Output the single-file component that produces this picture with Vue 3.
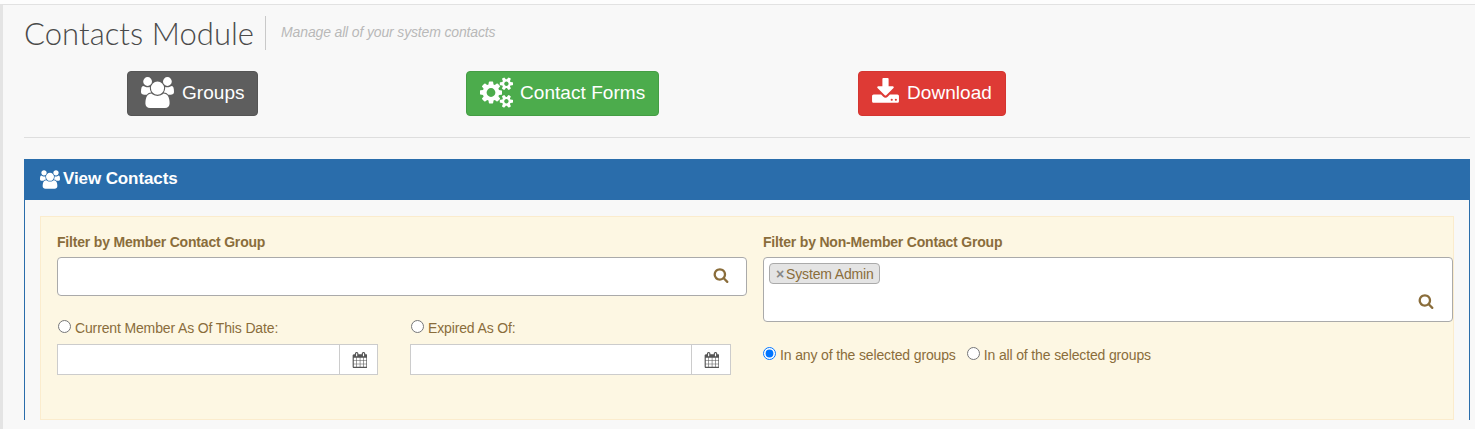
<script setup>
const usersPath = "M593 896q-162 5-265 128h-134q-82 0-138-40.500t-56-118.500q0-353 124-353 6 0 43.500 21t97.500 42.500 119 21.500q67 0 133-23-5 37-5 66 0 139 81 256zm1071 637q0 120-73 189.500t-194 69.500h-874q-121 0-194-69.500t-73-189.500q0-53 3.500-103.500t14-109 26.500-108.500 43-97.500 62-81 85.500-53.500 111.500-20q10 0 43 21.500t73 48 107 48 135 21.500 135-21.500 107-48 73-48 43-21.500q61 0 111.500 20t85.500 53.500 62 81 43 97.500 26.500 108.500 14 109 3.500 103.500zm-1024-1277q0 106-75 181t-181 75-181-75-75-181 75-181 181-75 181 75 75 181zm704 384q0 159-112.500 271.500t-271.500 112.500-271.500-112.500-112.500-271.500 112.500-271.500 271.500-112.500 271.500 112.500 112.500 271.500zm576 225q0 78-56 118.500t-138 40.500h-134q-103-123-265-128 81-117 81-256 0-29-5-66 66 23 133 23 59 0 119-21.500t97.500-42.500 43.500-21q124 0 124 353zm-128-609q0 106-75 181t-181 75-181-75-75-181 75-181 181-75 181 75 75 181z";
const cogsPath = "M896 896q0-106-75-181t-181-75-181 75-75 181 75 181 181 75 181-75 75-181zm768 512q0-52-38-90t-90-38-90 38-38 90q0 53 37.500 90.500t90.500 37.500 90.500-37.500 37.500-90.500zm0-1024q0-52-38-90t-90-38-90 38-38 90q0 53 37.500 90.500t90.500 37.500 90.500-37.500 37.500-90.500zm-384 421v185q0 10-7 19.500t-16 10.500l-155 24q-11 35-32 76 34 48 90 115 7 11 7 20 0 12-7 19-23 30-82.500 89.500t-78.500 59.500q-11 0-21-7l-115-90q-37 19-77 31-11 108-23 155-7 24-30 24h-186q-11 0-20-7.500t-10-17.500l-23-153q-34-10-75-31l-118 89q-7 7-20 7-11 0-21-8-144-133-144-160 0-9 7-19 10-14 41-53t47-61q-23-44-35-82l-152-24q-10-1-17-9.500t-7-19.500v-185q0-10 7-19.500t16-10.500l155-24q11-35 32-76-34-48-90-115-7-11-7-20 0-12 7-20 22-30 82-89t79-59q11 0 21 7l115 90q34-18 77-32 11-108 23-154 7-24 30-24h186q11 0 20 7.500t10 17.500l23 153q34 10 75 31l118-89q8-7 20-7 11 0 21 8 144 133 144 160 0 8-7 19-12 16-42 54t-45 60q23 48 34 82l152 23q10 2 17 10.500t7 19.500zm640 533v140q0 16-149 31-12 27-30 52 51 113 51 138 0 4-4 7-122 71-124 71-8 0-46-47t-52-68q-20 2-30 2t-30-2q-14 21-52 68t-46 47q-2 0-124-71-4-3-4-7 0-25 51-138-18-25-30-52-149-15-149-31v-140q0-16 149-31 13-29 30-52-51-113-51-138 0-4 4-7 4-2 35-20t59-34 30-16q8 0 46 46.500t52 67.500q20-2 30-2t30 2q51-71 92-112l6-2q4 0 124 70 4 3 4 7 0 25-51 138 17 23 30 52 149 15 149 31zm0-1024v140q0 16-149 31-12 27-30 52 51 113 51 138 0 4-4 7-122 71-124 71-8 0-46-47t-52-68q-20 2-30 2t-30-2q-14 21-52 68t-46 47q-2 0-124-71-4-3-4-7 0-25 51-138-18-25-30-52-149-15-149-31v-140q0-16 149-31 13-29 30-52-51-113-51-138 0-4 4-7 4-2 35-20t59-34 30-16q8 0 46 46.500t52 67.500q20-2 30-2t30 2q51-71 92-112l6-2q4 0 124 70 4 3 4 7 0 25-51 138 17 23 30 52 149 15 149 31z";
const downloadPath = "M1344 1344q0-26-19-45t-45-19-45 19-19 45 19 45 45 19 45-19 19-45zm256 0q0-26-19-45t-45-19-45 19-19 45 19 45 45 19 45-19 19-45zm128-224v320q0 40-28 68t-68 28h-1472q-40 0-68-28t-28-68v-320q0-40 28-68t68-28h465l135 136q58 56 136 56t136-56l136-136h464q40 0 68 28t28 68zm-325-569q17 41-14 70l-448 448q-18 19-45 19t-45-19l-448-448q-31-29-14-70 17-39 59-39h256v-448q0-26 19-45t45-19h256q26 0 45 19t19 45v448h256q42 0 59 39z";
const searchPath = "M1216 832q0-185-131.500-316.500t-316.500-131.500-316.500 131.500-131.500 316.500 131.500 316.500 316.500 131.500 316.500-131.500 131.500-316.500zm512 832q0 52-38 90t-90 38q-54 0-90-38l-343-342q-179 124-399 124-143 0-273.500-55.500t-225-150-150-225-55.500-273.500 55.500-273.500 150-225 225-150 273.500-55.500 273.500 55.500 225 150 150 225 55.500 273.500q0 220-124 399l343 343q37 37 37 90z";
const calendarPath = "M192 1664h288v-288h-288v288zm352 0h320v-288h-320v288zm-352-352h288v-320h-288v320zm352 0h320v-320h-320v320zm-352-384h288v-288h-288v288zm736 736h320v-288h-320v288zm-384-736h320v-288h-320v288zm768 736h288v-288h-288v288zm-384-352h320v-320h-320v320zm-352-864v-288q0-13-9.500-22.500t-22.500-9.500h-64q-13 0-22.500 9.500t-9.500 22.500v288q0 13 9.500 22.500t22.500 9.500h64q13 0 22.500-9.500t9.500-22.500zm736 864h288v-320h-288v320zm-384-384h320v-288h-320v288zm384 0h288v-288h-288v288zm32-480v-288q0-13-9.500-22.500t-22.500-9.500h-64q-13 0-22.500 9.500t-9.500 22.500v288q0 13 9.500 22.500t22.500 9.500h64q13 0 22.500-9.500t9.500-22.500zm384-64v1280q0 52-38 90t-90 38h-1408q-52 0-90-38t-38-90v-1280q0-52 38-90t90-38h128v-96q0-66 47-113t113-47h64q66 0 113 47t47 113v96h384v-96q0-66 47-113t113-47h64q66 0 113 47t47 113v96h128q52 0 90 38t38 90z";
</script>

<template>
  <div class="page">
    <div class="content">
      <header class="title-row">
        <h1 class="title">Contacts Module</h1>
        <span class="subtitle">Manage all of your system contacts</span>
      </header>

      <div class="actions">
        <a class="btn btn-groups">
          <svg class="btn-icon icon-users" viewBox="0 0 1920 1792"><path :d="usersPath" fill="currentColor" /></svg>
          Groups
        </a>
        <a class="btn btn-forms">
          <svg class="btn-icon icon-cogs" viewBox="0 0 1920 1792"><path :d="cogsPath" fill="currentColor" /></svg>
          Contact Forms
        </a>
        <a class="btn btn-download">
          <svg class="btn-icon icon-download" viewBox="0 0 1792 1792"><path :d="downloadPath" fill="currentColor" /></svg>
          Download
        </a>
      </div>

      <hr class="rule" />

      <section class="panel">
        <div class="panel-head">
          <svg class="head-icon" viewBox="0 0 1920 1792"><path :d="usersPath" fill="currentColor" /></svg>
          <span>View Contacts</span>
        </div>
        <div class="panel-body">
          <div class="filters">
            <div class="col">
              <label class="field-label">Filter by Member Contact Group</label>
              <div class="select select-single">
                <svg class="search" viewBox="0 0 1792 1792"><path :d="searchPath" fill="currentColor" /></svg>
              </div>
              <div class="dates">
                <div class="date">
                  <label class="radio-line">
                    <input type="radio" name="member" />
                    <span>Current Member As Of This Date:</span>
                  </label>
                  <div class="date-input">
                    <div class="date-field"></div>
                    <div class="date-addon">
                      <svg class="calendar" viewBox="0 0 1664 1792"><path :d="calendarPath" fill="currentColor" /></svg>
                    </div>
                  </div>
                </div>
                <div class="date">
                  <label class="radio-line">
                    <input type="radio" name="member" />
                    <span>Expired As Of:</span>
                  </label>
                  <div class="date-input">
                    <div class="date-field"></div>
                    <div class="date-addon">
                      <svg class="calendar" viewBox="0 0 1664 1792"><path :d="calendarPath" fill="currentColor" /></svg>
                    </div>
                  </div>
                </div>
              </div>
            </div>

            <div class="col">
              <label class="field-label">Filter by Non-Member Contact Group</label>
              <div class="select select-multi">
                <span class="tag"><span class="tag-x">×</span>System Admin</span>
                <svg class="search" viewBox="0 0 1792 1792"><path :d="searchPath" fill="currentColor" /></svg>
              </div>
              <div class="match">
                <label class="radio-line">
                  <input type="radio" name="match" checked />
                  <span>In any of the selected groups</span>
                </label>
                <label class="radio-line">
                  <input type="radio" name="match" />
                  <span>In all of the selected groups</span>
                </label>
              </div>
            </div>
          </div>
        </div>
      </section>
    </div>
  </div>
</template>

<style>
html, body {
  margin: 0;
  background: #fdfdfd;
  overflow: hidden;
}
</style>

<style scoped>
.page {
  height: 429px;
  box-sizing: border-box;
  padding-top: 4px;
  font-family: "Liberation Sans", Arial, sans-serif;
  overflow: hidden;
}
.content {
  height: 100%;
  box-sizing: border-box;
  padding: 11px 5px 0 21px;
  background: #f8f8f8;
  border-top: 1px solid #e2e2e2;
  border-left: 3px solid #e4e4e4;
}
.title-row {
  display: flex;
  align-items: flex-start;
  height: 34px;
}
.title {
  margin: 0;
  padding-right: 11px;
  height: 34px;
  border-right: 1px solid #c9c9c9;
  font-family: Lato, sans-serif;
  font-weight: 300;
  font-size: 31px;
  letter-spacing: 0.05px;
  line-height: 35px;
  color: #4a4a4a;
}
.subtitle {
  margin: 8px 0 0 15px;
  font-style: italic;
  font-size: 14px;
  letter-spacing: -0.15px;
  line-height: 16px;
  color: #b9b9b9;
}
.actions {
  display: flex;
  padding: 21px 0 0 103px;
  height: 45px;
}
.btn {
  display: flex;
  align-items: center;
  box-sizing: border-box;
  height: 45px;
  padding-bottom: 2px;
  border-radius: 4px;
  border: 1px solid;
  color: #fff;
  font-size: 19px;
  letter-spacing: 0.05px;
}
.btn-icon {
  display: block;
}
.btn-groups {
  width: 131px;
  padding-left: 13px;
  background: #5e5e5e;
  border-color: #555;
}
.icon-users {
  width: 33px;
  height: 31px;
  margin-right: 8px;
}
.btn-forms {
  width: 193px;
  margin-left: 208px;
  padding-left: 13px;
  background: #4cac4c;
  border-color: #449d44;
}
.icon-cogs {
  width: 33px;
  height: 31px;
  margin-right: 7px;
}
.btn-download {
  width: 148px;
  margin-left: 199px;
  padding-left: 12px;
  background: #de3a35;
  border-color: #d43530;
}
.icon-download {
  width: 29px;
  height: 29px;
  margin-right: 7px;
}
.rule {
  margin: 21px 0 0;
  border: 0;
  border-top: 1px solid #dedede;
}
.panel {
  margin-top: 21px;
  border: 1px solid #2a6dab;
  border-bottom: 0;
}
.panel-head {
  display: flex;
  align-items: center;
  height: 40px;
  padding-left: 15px;
  margin: -1px -1px 0;
  padding-bottom: 1px;
  background: #2a6dab;
  color: #fff;
  font-size: 17px;
  letter-spacing: -0.1px;
  font-weight: 700;
}
.head-icon {
  width: 20px;
  height: 19px;
  margin: 0 3px 0 1px;
  flex: none;
}
.panel-body {
  padding: 16px 15px 0;
}
.filters {
  display: grid;
  grid-template-columns: 690px 690px;
  column-gap: 16px;
  height: 204px;
  box-sizing: border-box;
  padding: 16px 0 0 16px;
  background: #fdf7e3;
  border: 1px solid #fbeccd;
  color: #8a6d3b;
  font-size: 14px;
}
.field-label {
  display: block;
  font-weight: 700;
  font-size: 14px;
  letter-spacing: -0.19px;
  line-height: 18px;
  margin-bottom: 6px;
}
.select {
  position: relative;
  box-sizing: border-box;
  background: #fff;
  border: 1px solid #aaa;
  border-radius: 4px;
}
.select-single {
  height: 39px;
}
.select-multi {
  height: 65px;
  padding: 5px 5px;
}
.search {
  position: absolute;
  right: 18px;
  bottom: 12px;
  width: 16px;
  height: 16px;
  color: #8a6d3b;
}
.select-single .search {
  right: 17px;
}
.tag {
  display: inline-flex;
  align-items: center;
  box-sizing: border-box;
  height: 21px;
  padding: 0 5px 0 6px;
  background: #e4e4e4;
  border: 1px solid #aaa;
  border-radius: 4px;
  font-size: 14px;
  letter-spacing: -0.15px;
}
.tag-x {
  color: #888;
  font-weight: 700;
  margin-right: 2px;
}
.dates {
  display: flex;
  gap: 32px;
  margin-top: 23px;
}
.date {
  width: 321px;
}
.radio-line {
  display: flex;
  align-items: flex-start;
  line-height: 18px;
  font-size: 14px;
  letter-spacing: -0.14px;
}
.radio-line input {
  margin: 1px 4px 0 0;
  width: 13px;
  height: 13px;
  flex: none;
}
.dates .radio-line input {
  margin-left: 1px;
}
.date-input {
  display: flex;
  height: 31px;
  margin-top: 7px;
  box-sizing: border-box;
  background: #fff;
  border: 1px solid #ccc;
}
.date-field {
  flex: 1;
}
.date-addon {
  display: flex;
  align-items: center;
  justify-content: center;
  width: 38px;
  border-left: 1px solid #ccc;
}
.date:first-child .date-addon {
  width: 37px;
}
.calendar {
  width: 15px;
  height: 16px;
  margin-left: 1px;
  color: #555;
}
.match {
  display: flex;
  gap: 11px;
  margin-top: 24px;
}
</style>
